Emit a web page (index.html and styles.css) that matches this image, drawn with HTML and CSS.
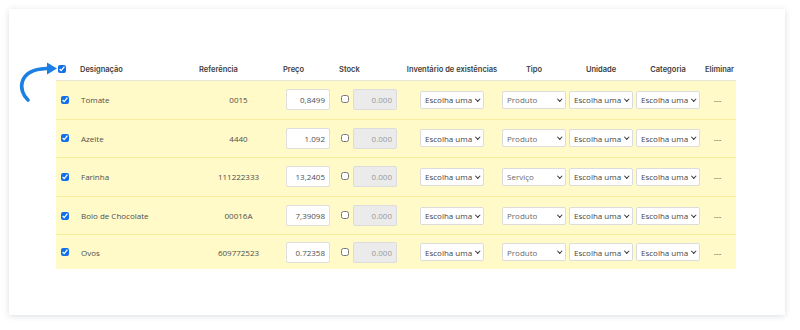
FILE: index.html
```html
<!DOCTYPE html>
<html lang="pt">
<head>
<meta charset="utf-8">
<title>Produtos</title>
<link rel="stylesheet" href="styles.css">
</head>
<body>
<div class="card">
  <svg class="arrow" width="50" height="46" viewBox="0 0 50 46" aria-hidden="true">
    <path d="M14 38 C4 29 3 8 32 6.5 L35 6.5" fill="none" stroke="#1b7fe3" stroke-width="3.6" stroke-linecap="round"/>
    <polygon points="33,0.5 43,6.5 33,12.5" fill="#1b7fe3"/>
  </svg>
  <div class="table">
    <div class="row head">
      <div class="c c1"><input type="checkbox" class="chk" checked></div>
      <div class="c c2">Designação</div>
      <div class="c c3">Referência</div>
      <div class="c c4">Preço</div>
      <div class="c c5">Stock</div>
      <div class="c c6 center">Inventário de existências</div>
      <div class="c c7 center">Tipo</div>
      <div class="c c8 center">Unidade</div>
      <div class="c c9 center">Categoria</div>
      <div class="c c10 center">Eliminar</div>
    </div>

    <div class="row item">
      <div class="c c1"><input type="checkbox" class="chk" checked></div>
      <div class="c c2">Tomate</div>
      <div class="c c3 center">0015</div>
      <div class="c c4"><input class="price" type="text" value="0,8499"></div>
      <div class="c c5"><input type="checkbox" class="chk off"><input class="stock" type="text" value="0.000" disabled></div>
      <div class="c c6 center"><span class="sel"><select><option>Escolha uma</option></select></span></div>
      <div class="c c7 center"><span class="sel"><select class="muted"><option>Produto</option></select></span></div>
      <div class="c c8 center"><span class="sel"><select><option>Escolha uma</option></select></span></div>
      <div class="c c9 center"><span class="sel"><select><option>Escolha uma</option></select></span></div>
      <div class="c c10 center dash">---</div>
    </div>

    <div class="row item">
      <div class="c c1"><input type="checkbox" class="chk" checked></div>
      <div class="c c2">Azeite</div>
      <div class="c c3 center">4440</div>
      <div class="c c4"><input class="price" type="text" value="1.092"></div>
      <div class="c c5"><input type="checkbox" class="chk off"><input class="stock" type="text" value="0.000" disabled></div>
      <div class="c c6 center"><span class="sel"><select><option>Escolha uma</option></select></span></div>
      <div class="c c7 center"><span class="sel"><select class="muted"><option>Produto</option></select></span></div>
      <div class="c c8 center"><span class="sel"><select><option>Escolha uma</option></select></span></div>
      <div class="c c9 center"><span class="sel"><select><option>Escolha uma</option></select></span></div>
      <div class="c c10 center dash">---</div>
    </div>

    <div class="row item">
      <div class="c c1"><input type="checkbox" class="chk" checked></div>
      <div class="c c2">Farinha</div>
      <div class="c c3 center">111222333</div>
      <div class="c c4"><input class="price" type="text" value="13,2405"></div>
      <div class="c c5"><input type="checkbox" class="chk off"><input class="stock" type="text" value="0.000" disabled></div>
      <div class="c c6 center"><span class="sel"><select><option>Escolha uma</option></select></span></div>
      <div class="c c7 center"><span class="sel"><select class="muted"><option>Serviço</option></select></span></div>
      <div class="c c8 center"><span class="sel"><select><option>Escolha uma</option></select></span></div>
      <div class="c c9 center"><span class="sel"><select><option>Escolha uma</option></select></span></div>
      <div class="c c10 center dash">---</div>
    </div>

    <div class="row item">
      <div class="c c1"><input type="checkbox" class="chk" checked></div>
      <div class="c c2">Bolo de Chocolate</div>
      <div class="c c3 center">00016A</div>
      <div class="c c4"><input class="price" type="text" value="7,39098"></div>
      <div class="c c5"><input type="checkbox" class="chk off"><input class="stock" type="text" value="0.000" disabled></div>
      <div class="c c6 center"><span class="sel"><select><option>Escolha uma</option></select></span></div>
      <div class="c c7 center"><span class="sel"><select class="muted"><option>Produto</option></select></span></div>
      <div class="c c8 center"><span class="sel"><select><option>Escolha uma</option></select></span></div>
      <div class="c c9 center"><span class="sel"><select><option>Escolha uma</option></select></span></div>
      <div class="c c10 center dash">---</div>
    </div>

    <div class="row item last">
      <div class="c c1"><input type="checkbox" class="chk" checked></div>
      <div class="c c2">Ovos</div>
      <div class="c c3 center">609772523</div>
      <div class="c c4"><input class="price" type="text" value="0.72358"></div>
      <div class="c c5"><input type="checkbox" class="chk off"><input class="stock" type="text" value="0.000" disabled></div>
      <div class="c c6 center"><span class="sel"><select><option>Escolha uma</option></select></span></div>
      <div class="c c7 center"><span class="sel"><select class="muted"><option>Produto</option></select></span></div>
      <div class="c c8 center"><span class="sel"><select><option>Escolha uma</option></select></span></div>
      <div class="c c9 center"><span class="sel"><select><option>Escolha uma</option></select></span></div>
      <div class="c c10 center dash">---</div>
    </div>
  </div>
</div>
</body>
</html>
```
FILE: styles.css
```css
html, body {
  margin: 0;
  padding: 0;
  background: #ffffff;
}
body {
  width: 800px;
  height: 330px;
  overflow: hidden;
  font-family: "Open Sans", "DejaVu Sans", sans-serif;
}
.card {
  position: relative;
  box-sizing: border-box;
  margin: 9px 0 0 9px;
  width: 776px;
  height: 306px;
  background: #ffffff;
  box-shadow: 0 1px 6px rgba(40, 50, 80, 0.16);
  padding: 51px 0 0 47px;
}
.arrow {
  position: absolute;
  left: 5px;
  top: 53px;
}
.table {
  width: 680px;
  display: flex;
  flex-direction: column;
}
.row {
  display: grid;
  grid-template-columns: 22px 119px 83px 57px 65px 100px 64px 70px 64px 36px;
  align-items: center;
  box-sizing: border-box;
}
.head {
  height: 21px;
  border-bottom: 1px solid #e9e6d6;
  font-family: "Inter", "Open Sans", sans-serif;
  font-weight: 600;
  font-size: 7.5px;
  color: #3d3d3d;
  padding-bottom: 2px;
}
.item {
  height: 38.6px;
  background: #fffac8;
  border-bottom: 1px solid #f6ec9c;
  font-size: 8px;
  color: #4e4e4e;
}
.item.last {
  height: 34px;
  border-bottom: none;
}
.c {
  display: flex;
  align-items: center;
  white-space: nowrap;
}
.center {
  justify-content: center;
}
.head .c1 { padding-left: 2px; }
.item .c1 { padding-left: 5px; }
.head .c2 { padding-left: 2px; }
.item .c2 { padding-left: 3px; }
.head .c3 { padding-left: 2px; }
.head .c4 { padding-left: 3px; }
.item .c4 { padding-left: 6px; }
.head .c5 { padding-left: 2px; }
.item .c5 { padding-left: 4px; gap: 4px; }
.head .c10 { padding-left: 3px; }

.chk {
  width: 8px;
  height: 8px;
  margin: 0;
  accent-color: #1170e8;
}
.chk.off {
  margin-top: -1px;
}
.price,
.stock {
  box-sizing: border-box;
  width: 44px;
  height: 21px;
  margin: 0;
  padding: 0 4px;
  text-align: right;
  font-family: "Open Sans", sans-serif;
  font-size: 8px;
  color: #505050;
  border: 1px solid #dedede;
  border-radius: 2px;
  background: #ffffff;
  outline: none;
}
.stock {
  background: #ebebeb;
  color: #9a9a9a;
  border-color: #dcdcdc;
}
.sel {
  position: relative;
  display: inline-block;
  width: 64px;
  height: 18px;
}
.sel select {
  appearance: none;
  -webkit-appearance: none;
  box-sizing: border-box;
  width: 64px;
  height: 18px;
  margin: 0;
  padding: 0 10px 0 4px;
  font-family: "Open Sans", sans-serif;
  font-size: 8px;
  color: #444444;
  background: #ffffff;
  border: 1px solid #dcdcdc;
  border-radius: 2px;
  outline: none;
}
.sel select.muted {
  color: #6a6a6a;
}
.sel::after {
  content: "";
  position: absolute;
  right: 5px;
  top: 6px;
  width: 2.5px;
  height: 2.5px;
  border-right: 1.3px solid #333;
  border-bottom: 1.3px solid #333;
  transform: rotate(45deg);
  pointer-events: none;
}
.dash {
  font-size: 8px;
  color: #555;
  padding-right: 1px;
}
```
